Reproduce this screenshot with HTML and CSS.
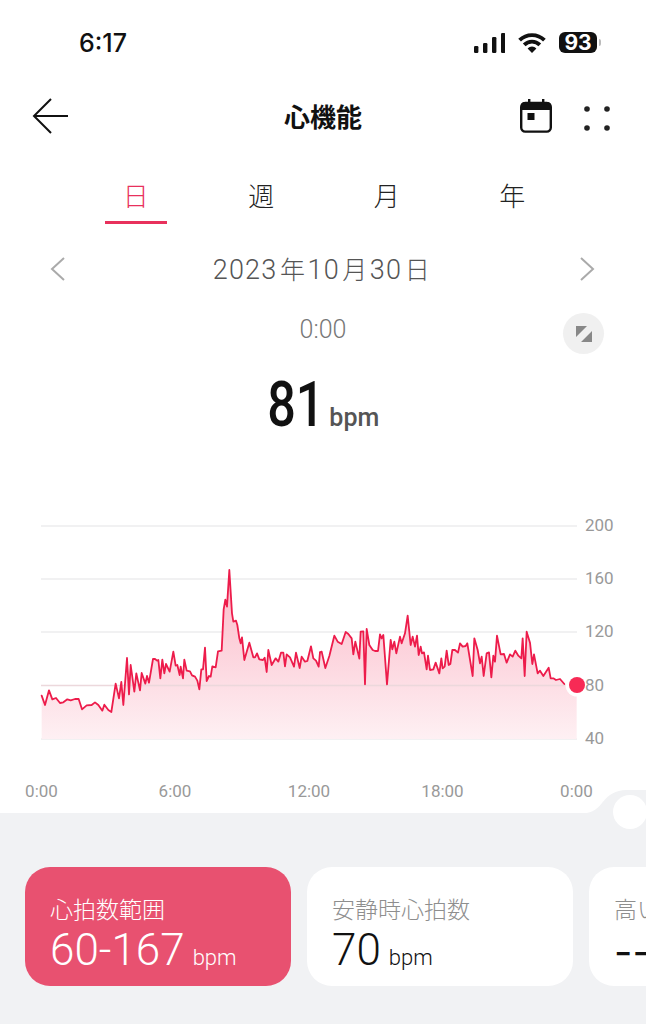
FILE: index.html
```html
<!DOCTYPE html>
<html lang="ja">
<head>
<meta charset="utf-8">
<title>心機能</title>
<link rel="stylesheet" href="styles.css">
</head>
<body>
<div class="screen">
  <section class="top">
    <header class="status">
      <span class="clock">6:17</span>
      <div class="status-icons">
        <svg class="signal" viewBox="0 0 31 20" width="31" height="20"><rect x="0" y="13" width="4.4" height="7" rx="1.2"/><rect x="9" y="10" width="4.4" height="10" rx="1.2"/><rect x="18" y="4" width="4.4" height="16" rx="1.2"/><rect x="27" y="0" width="4.4" height="20" rx="1.2"/></svg>
        <svg class="wifi" viewBox="0 0 28 20" width="28" height="20"><path d="M1.6 7.2a17.5 17.5 0 0 1 24.8 0" /><path d="M6.2 11.8a11 11 0 0 1 15.6 0"/><path class="wifi-dot" d="M14 20l-4.4-4.6a6.2 6.2 0 0 1 8.8 0z"/></svg>
        <div class="battery"><span class="battery-level">93</span><i class="battery-nub"></i></div>
      </div>
    </header>
    <nav class="navbar">
      <svg class="back" viewBox="0 0 36 36" width="36" height="36"><path d="M36 18H2M19 1 2 18l17 17"/></svg>
      <h1 class="title">心機能</h1>
      <div class="nav-actions">
        <svg class="calendar" viewBox="0 0 32 34" width="32" height="34"><path class="cal-fill" d="M8 0h2.4v3H22V0h2.4v3H27a4 4 0 0 1 4 4v4H1V7a4 4 0 0 1 4-4h3z"/><rect class="cal-body" x="1.2" y="4" width="29.6" height="28.6" rx="4"/><rect class="cal-fill" x="7.5" y="14" width="7" height="7"/></svg>
        <svg class="dots" viewBox="0 0 26 25" width="26" height="25"><circle cx="3" cy="3" r="2.8"/><circle cx="23" cy="3" r="2.8"/><circle cx="3" cy="22" r="2.8"/><circle cx="23" cy="22" r="2.8"/></svg>
      </div>
    </nav>
    <div class="tabs">
      <div class="tab tab-active">日</div>
      <div class="tab">週</div>
      <div class="tab">月</div>
      <div class="tab">年</div>
    </div>
    <div class="date-row">
      <svg class="chev" viewBox="0 0 15 24" width="15" height="24"><path d="M14 1 2 12l12 11"/></svg>
      <span class="date">2023<span class="cjk">年</span>10<span class="cjk">月</span>30<span class="cjk">日</span></span>
      <svg class="chev" viewBox="0 0 15 24" width="15" height="24"><path d="M1 1l12 11L1 23"/></svg>
    </div>
    <div class="time">0:00</div>
    <button class="expand" type="button" aria-label="expand"><svg viewBox="0 0 16 16" width="16" height="16"><path d="M0 0h11L0 11zM16 5v11H5z"/></svg></button>
    <div class="reading"><span class="reading-value">81</span><span class="reading-unit">bpm</span></div>
    <svg class="chart" viewBox="0 505 646 300" width="646" height="300">
      <defs>
        <linearGradient id="fa" gradientUnits="userSpaceOnUse" x1="0" y1="60" x2="0" y2="567"><stop offset="0" stop-color="#fbb9c8"/><stop offset="1" stop-color="#fef0f3"/></linearGradient>
        <linearGradient id="fb" gradientUnits="userSpaceOnUse" x1="0" y1="-60" x2="0" y2="447"><stop offset="0" stop-color="#fbb9c8"/><stop offset="1" stop-color="#fef0f3"/></linearGradient>
      </defs>
      <g class="grid"><line x1="41" x2="577" y1="526" y2="526"/><line x1="41" x2="577" y1="579" y2="579"/><line x1="41" x2="577" y1="632" y2="632"/><line x1="41" x2="577" y1="739" y2="739"/></g>
      <g transform="translate(20 550) scale(.33333)">
        <polygon fill="url(#fa)" points="65,567 65,437 75,465 87,421 97,448 108,444 120,459 130,457 142,448 152,451 165,447 176,447 186,478 200,466 215,465 225,457 235,465 247,482 253,464 265,480 274,486 287,401 297,445 304,396 310,465 321,324 327,433 332,345 343,425 349,370 360,421 365,369 376,401 381,378 387,398 399,327 405,327 411,332 415,330 421,385 427,329 433,370 438,342 449,365 460,305 467,347 472,345 479,375 482,350 489,385 493,329 500,362 510,364 516,376 525,380 532,392 538,418 544,358 549,358 555,293 560,393 567,378 572,380 577,349 587,352 594,304 605,302 611,178 616,149 621,170 628,60 636,190 640,215 648,212 652,225 658,265 662,280 666,262 673,330 688,278 700,322 705,322 711,310 718,328 729,330 734,323 740,366 745,300 755,345 767,325 775,335 783,308 790,308 795,349 800,313 810,322 822,350 828,308 839,354 845,320 855,335 862,333 873,289 880,325 888,332 896,350 900,307 900,567"/>
      </g>
      <g transform="translate(320 590) scale(.33333)">
        <polygon fill="url(#fb)" points="0,447 0,187 5,185 16,234 28,198 43,137 53,155 65,162 77,126 85,132 95,145 100,193 106,155 118,206 122,125 130,124 135,283 140,117 148,165 158,180 165,183 174,183 180,133 185,145 190,135 201,283 212,150 217,178 223,155 229,190 240,140 245,160 255,130 263,77 272,165 278,140 285,170 291,137 296,195 302,170 306,190 312,187 320,238 324,197 330,240 340,238 347,218 358,250 364,205 368,235 374,230 380,182 386,225 391,222 397,180 405,180 414,188 420,160 428,170 437,168 442,160 458,258 463,145 473,180 480,220 485,200 491,258 500,190 507,187 514,262 520,197 525,215 531,137 542,193 552,192 560,218 570,193 578,200 586,182 595,197 604,205 608,145 614,258 620,125 630,158 637,222 642,193 653,250 660,242 670,258 686,233 692,265 700,265 708,270 720,267 733,282 770,284 770,447"/>
      </g>
      <line class="grid-over" x1="41" x2="577" y1="685.5" y2="685.5"/>
      <g transform="translate(20 550) scale(.33333)">
        <polyline class="trace" points="65,437 75,465 87,421 97,448 108,444 120,459 130,457 142,448 152,451 165,447 176,447 186,478 200,466 215,465 225,457 235,465 247,482 253,464 265,480 274,486 287,401 297,445 304,396 310,465 321,324 327,433 332,345 343,425 349,370 360,421 365,369 376,401 381,378 387,398 399,327 405,327 411,332 415,330 421,385 427,329 433,370 438,342 449,365 460,305 467,347 472,345 479,375 482,350 489,385 493,329 500,362 510,364 516,376 525,380 532,392 538,418 544,358 549,358 555,293 560,393 567,378 572,380 577,349 587,352 594,304 605,302 611,178 616,149 621,170 628,60 636,190 640,215 648,212 652,225 658,265 662,280 666,262 673,330 688,278 700,322 705,322 711,310 718,328 729,330 734,323 740,366 745,300 755,345 767,325 775,335 783,308 790,308 795,349 800,313 810,322 822,350 828,308 839,354 845,320 855,335 862,333 873,289 880,325 888,332 896,350 900,307"/>
      </g>
      <g transform="translate(320 590) scale(.33333)">
        <polyline class="trace" points="0,187 5,185 16,234 28,198 43,137 53,155 65,162 77,126 85,132 95,145 100,193 106,155 118,206 122,125 130,124 135,283 140,117 148,165 158,180 165,183 174,183 180,133 185,145 190,135 201,283 212,150 217,178 223,155 229,190 240,140 245,160 255,130 263,77 272,165 278,140 285,170 291,137 296,195 302,170 306,190 312,187 320,238 324,197 330,240 340,238 347,218 358,250 364,205 368,235 374,230 380,182 386,225 391,222 397,180 405,180 414,188 420,160 428,170 437,168 442,160 458,258 463,145 473,180 480,220 485,200 491,258 500,190 507,187 514,262 520,197 525,215 531,137 542,193 552,192 560,218 570,193 578,200 586,182 595,197 604,205 608,145 614,258 620,125 630,158 637,222 642,193 653,250 660,242 670,258 686,233 692,265 700,265 708,270 720,267 733,282"/>
      </g>
      <circle class="dot-ring" cx="577" cy="685" r="11.5"/>
      <circle class="dot" cx="577" cy="685" r="8"/>
      <g class="axis">
        <text x="585" y="531">200</text><text x="585" y="584">160</text><text x="585" y="637">120</text><text x="585" y="691">80</text><text x="585" y="744">40</text>
        <text class="mid" x="41.500" y="797">0:00</text><text class="mid" x="175" y="797">6:00</text><text class="mid" x="309" y="797">12:00</text><text class="mid" x="442.500" y="797">18:00</text><text class="mid" x="576.500" y="797">0:00</text>
      </g>
    </svg>
  </section>
  <svg class="bump" viewBox="0 0 66 50" width="66" height="50"><path class="bump-bg" d="M0 28.500C10 28.500 16 26 22 18 28 10 36 5 46 5H66V50H0Z"/><circle class="bump-knob" cx="50" cy="27" r="17"/></svg>
  <section class="bottom">
    <div class="cards">
      <article class="card card-active"><div class="card-label">心拍数範囲</div><div class="card-value">60-167<span class="card-unit">bpm</span></div></article>
      <article class="card"><div class="card-label">安静時心拍数</div><div class="card-value">70<span class="card-unit">bpm</span></div></article>
      <article class="card"><div class="card-label">高い心拍数</div><div class="card-value card-dash">--<span class="card-unit">bpm</span></div></article>
    </div>
  </section>
</div>
</body>
</html>
```
FILE: styles.css
```css
* { box-sizing: border-box; }
html, body { margin: 0; padding: 0; background: #fff; }
body { font-family: Roboto, "Noto Sans CJK JP", sans-serif; width: 648px; height: 1024px; overflow: hidden; }
.screen { position: relative; width: 646px; height: 1024px; display: flex; flex-direction: column; overflow: hidden; background: #fff; }
.top { position: relative; height: 813px; flex: none; }

.status { height: 86px; padding: 26px 49px 0 79px; display: flex; justify-content: space-between; align-items: flex-start; }
.clock { font-family: Inter, sans-serif; font-weight: 500; font-size: 25px; line-height: 34px; color: #111; }
.status-icons { display: flex; align-items: center; padding-top: 6px; }
.signal { fill: #111; margin-right: 13px; margin-top: 1px; }
.wifi { margin-right: 13px; margin-top: 1px; }
.wifi path { fill: none; stroke: #111; stroke-width: 3.8; }
.wifi .wifi-dot { fill: #111; stroke: none; }
.battery { position: relative; width: 38px; height: 21px; border-radius: 6px; background: #111; display: flex; align-items: center; justify-content: center; }
.battery-level { font-family: Inter, sans-serif; font-weight: 700; font-size: 21px; line-height: 21px; color: #fff; }
.battery-nub { position: absolute; right: -4px; top: 7px; width: 2px; height: 7px; border-radius: 0 2px 2px 0; background: #bbb; }

.navbar { position: relative; height: 60px; display: flex; align-items: center; justify-content: center; }
.back { position: absolute; left: 32px; top: 12px; fill: none; stroke: #111; stroke-width: 2; }
.title { margin: 0; font-family: "Noto Sans CJK JP", sans-serif; font-weight: 700; font-size: 26px; line-height: 60px; color: #111; }
.nav-actions { position: absolute; left: 520px; top: 13px; display: flex; gap: 32px; align-items: center; }
.calendar { display: block; }
.cal-fill { fill: #111; }
.cal-body { fill: none; stroke: #111; stroke-width: 2.4; }
.dots { fill: #222; margin-top: 5px; }

.tabs { display: flex; padding: 22px 0 0 73px; height: 78px; }
.tab { width: 125.500px; height: 56px; position: relative; text-align: center; font-family: "Noto Sans CJK JP", sans-serif; font-size: 26px; font-weight: 300; line-height: 54px; color: #222; }
.tab-active { color: #e8315c; }
.tab-active::after { content: ""; position: absolute; left: 32px; bottom: 0; width: 62px; height: 3px; background: #e8315c; }

.date-row { height: 46px; display: flex; align-items: center; justify-content: space-between; padding: 0 51px 0 50px; margin-top: 22px; }
.chev { fill: none; stroke: #aaa; stroke-width: 2; }
.date { font-size: 27px; font-weight: 300; line-height: 46px; color: #555; letter-spacing: 1.2px; }
.cjk { font-family: "Noto Sans CJK JP", sans-serif; font-weight: 300; font-size: 25px; letter-spacing: 0; margin: 0 2.500px; }

.time { margin-top: 20px; height: 36px; line-height: 36px; text-align: center; font-size: 25px; font-weight: 300; color: #777; }
.expand { position: absolute; left: 563px; top: 313px; width: 41px; height: 41px; border: 0; padding: 0; border-radius: 50%; background: #f0f0f0; display: flex; align-items: center; justify-content: center; }
.expand svg { fill: #888; }

.reading { margin-top: 18px; height: 78px; display: flex; justify-content: center; align-items: baseline; padding-right: 4px; }
.reading-value { display: inline-block; font-size: 63px; line-height: 78px; font-weight: 500; color: #111; transform: translateX(3px) scaleX(.8); margin: 0 -6px; }
.reading-unit { font-size: 25px; font-weight: 500; color: #555; margin-left: 7px; }

.chart { display: block; position: absolute; left: 0; top: 505px; }
.grid line { stroke: #ececee; stroke-width: 1.500; }
.grid-over { stroke: #ecd8dc; stroke-width: 1.500; }
.trace { fill: none; stroke: #ed1c4b; stroke-width: 5.400; stroke-linejoin: round; stroke-linecap: round; }
.dot-ring { fill: #fff; }
.dot { fill: #f72a55; }
.axis text { font-size: 17px; fill: #999; font-family: Roboto, sans-serif; }
.axis .mid { text-anchor: middle; }

.bump { position: absolute; left: 580px; top: 785px; z-index: 1; }
.bump-bg { fill: #f1f2f4; }
.bump-knob { fill: #fff; }

.bottom { flex: 1; background: #f1f2f4; padding: 54px 0 0 25px; }
.cards { display: flex; gap: 16.500px; position: relative; z-index: 2; }
.card { flex: none; width: 265.500px; height: 119px; border-radius: 25px; background: #fff; padding: 26px 0 0 25px; }
.card-active { background: #e85170; color: #fff; }
.card-label { font-family: "Noto Sans CJK JP", sans-serif; font-weight: 300; font-size: 23px; line-height: 30px; color: #8e8e8e; white-space: nowrap; }
.card-active .card-label { color: #fff; }
.card-value { font-size: 44px; line-height: 44px; font-weight: 300; color: #111; white-space: nowrap; margin-top: 5px; }
.card-active .card-value { color: #fff; }
.card-unit { font-size: 22px; font-weight: 300; margin-left: 8px; }
.card-dash { font-family: Inter, sans-serif; font-weight: 400; font-size: 40px; margin-top: 7px; }
```
